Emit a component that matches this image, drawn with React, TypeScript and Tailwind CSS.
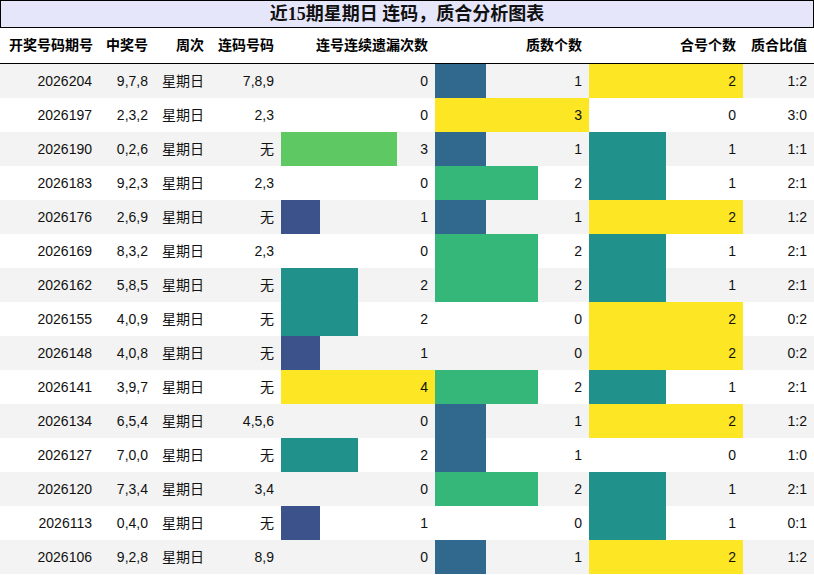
const rows: [string, string, string, number, number, number, string][] = [
  ["2026204", "9,7,8", "7,8,9", 0, 1, 2, "1:2"],
  ["2026197", "2,3,2", "2,3", 0, 3, 0, "3:0"],
  ["2026190", "0,2,6", "无", 3, 1, 1, "1:1"],
  ["2026183", "9,2,3", "2,3", 0, 2, 1, "2:1"],
  ["2026176", "2,6,9", "无", 1, 1, 2, "1:2"],
  ["2026169", "8,3,2", "2,3", 0, 2, 1, "2:1"],
  ["2026162", "5,8,5", "无", 2, 2, 1, "2:1"],
  ["2026155", "4,0,9", "无", 2, 0, 2, "0:2"],
  ["2026148", "4,0,8", "无", 1, 0, 2, "0:2"],
  ["2026141", "3,9,7", "无", 4, 2, 1, "2:1"],
  ["2026134", "6,5,4", "4,5,6", 0, 1, 2, "1:2"],
  ["2026127", "7,0,0", "无", 2, 1, 0, "1:0"],
  ["2026120", "7,3,4", "3,4", 0, 2, 1, "2:1"],
  ["2026113", "0,4,0", "无", 1, 0, 1, "0:1"],
  ["2026106", "9,2,8", "8,9", 0, 1, 2, "1:2"],
];

// viridis steps per column max
const lianColors: Record<number, string> = {
  1: "bg-[#3b528b]",
  2: "bg-[#21918c]",
  3: "bg-[#5ec962]",
  4: "bg-[#fde725]",
};
const zhiColors: Record<number, string> = {
  1: "bg-[#31688e]",
  2: "bg-[#35b779]",
  3: "bg-[#fde725]",
};
const heColors: Record<number, string> = {
  1: "bg-[#21918c]",
  2: "bg-[#fde725]",
};

const cols = "grid grid-cols-[100px_55px_56px_70px_154px_154px_154px_71px]";

function BarCell({ value, max, colors }: { value: number; max: number; colors: Record<number, string> }) {
  return (
    <div className="relative h-full">
      {value > 0 && (
        <div
          className={`absolute left-0 top-0 h-full ${colors[value]}`}
          style={{ width: `${(value / max) * 100}%` }}
        />
      )}
      <div className="relative flex h-full items-center justify-end pr-[7px]">{value}</div>
    </div>
  );
}

export default function App() {
  return (
    <div className="w-[814px] h-[575px] bg-white text-[14px] text-[#111] font-['Liberation_Sans','Noto_Sans_CJK_SC',sans-serif] overflow-hidden">
      <div className="h-[28px] border border-black bg-[#e6e6fa] flex items-center justify-center text-[18px] font-bold font-['Liberation_Serif','Noto_Sans_CJK_SC',serif]">
        近15期星期日 连码，质合分析图表
      </div>
      <div className={`${cols} h-[36px] border-b border-black font-bold text-black`}>
        {["开奖号码期号", "中奖号", "周次", "连码号码", "连号连续遗漏次数", "质数个数", "合号个数", "质合比值"].map((h) => (
          <div key={h} className="flex items-center justify-end pr-[7px]">
            {h}
          </div>
        ))}
      </div>
      {rows.map((r, i) => (
        <div key={r[0]} className={`${cols} h-[34px] ${i % 2 === 0 ? "bg-[#f3f3f3]" : "bg-white"}`}>
          <div className="flex items-center justify-end pr-[8px]">{r[0]}</div>
          <div className="flex items-center justify-end pr-[7px]">{r[1]}</div>
          <div className="flex items-center justify-end pr-[7px]">星期日</div>
          <div className="flex items-center justify-end pr-[7px]">{r[2]}</div>
          <BarCell value={r[3]} max={4} colors={lianColors} />
          <BarCell value={r[4]} max={3} colors={zhiColors} />
          <BarCell value={r[5]} max={2} colors={heColors} />
          <div className="flex items-center justify-end pr-[7px]">{r[6]}</div>
        </div>
      ))}
    </div>
  );
}
